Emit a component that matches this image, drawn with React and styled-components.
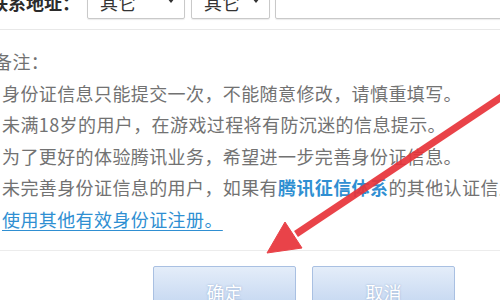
import styled, { createGlobalStyle } from 'styled-components';

const GlobalStyle = createGlobalStyle`
  html, body {
    margin: 0;
    padding: 0;
    background: #ffffff;
  }
  body {
    font-family: "Noto Sans CJK SC", "Noto Sans", sans-serif;
    overflow: hidden;
  }
`;

const StyledPage = styled.div`
  position: relative;
  width: 500px;
  height: 300px;
  overflow: hidden;
  background: #ffffff;
`;

const StyledAddressRow = styled.div`
  display: flex;
  align-items: center;
  margin-top: -15px;
  padding-bottom: 10px;
  border-bottom: 1px solid #e8e8e8;
  font-size: 18px;
`;

const StyledLabel = styled.span`
  flex: none;
  margin-left: -10px;
  width: 97px;
  color: #2b2b2b;
  font-weight: 700;
  line-height: 34px;
  white-space: nowrap;
`;

const StyledSelect = styled.div`
  flex: none;
  box-sizing: border-box;
  display: flex;
  align-items: center;
  justify-content: space-between;
  width: ${props => props.width}px;
  height: 34px;
  margin-right: ${props => props.gap}px;
  padding: 0 9px 0 12px;
  border: 1px solid #c9c9c9;
  border-radius: 2px;
  box-shadow: 0 1px 1px rgba(0, 0, 0, 0.08);
  color: #333333;
`;

const StyledCaret = styled.span`
  width: 0;
  height: 0;
  margin-top: -4px;
  border-left: 4px solid transparent;
  border-right: 4px solid transparent;
  border-top: 5px solid #333333;
`;

const StyledTextInput = styled.div`
  flex: 1;
  box-sizing: border-box;
  height: 34px;
  margin-right: -10px;
  border: 1px solid #c9c9c9;
  border-radius: 2px;
  box-shadow: 0 1px 1px rgba(0, 0, 0, 0.08);
`;

const StyledNotes = styled.div`
  padding: 16px 0 15px 2px;
  border-bottom: 1px solid #ececec;
  color: #727272;
  font-size: 18px;
  letter-spacing: 0.4px;
  line-height: 31.5px;
  white-space: nowrap;
`;

const StyledNoteTitle = styled.div`
  margin-left: -8px;
`;

const StyledNoteLine = styled.div``;

const StyledHighlight = styled.span`
  color: #2f8fd2;
  font-weight: 700;
`;

const StyledRegisterLink = styled.a`
  color: #2f8fd2;
  text-decoration: underline;
  text-underline-offset: 3px;
  cursor: pointer;
`;

const StyledButtonBar = styled.div`
  display: flex;
  gap: 16px;
  padding: 15px 0 0 153px;
`;

const StyledActionButton = styled.button`
  box-sizing: border-box;
  width: 143px;
  height: 52px;
  padding: 0;
  border: 1px solid #a9c0e2;
  border-radius: 2px;
  background: linear-gradient(#e4edf9, #bcd1ef);
  color: #ffffff;
  font-family: inherit;
  font-size: 18px;
  line-height: 50px;
  text-shadow: 0 0 2px #8ea7cc;
`;

const StyledPointer = styled.svg`
  position: absolute;
  top: 0;
  left: 0;
  pointer-events: none;
`;

const PointerArrow = () => (
  <StyledPointer width="500" height="300" viewBox="0 0 500 300">
    <g fill="#e8343a" stroke="#e8343a" opacity="0.92">
      <line x1="515" y1="88" x2="296" y2="234" strokeWidth="7" />
      <polygon points="267,253 285,222 302,248" strokeWidth="1" strokeLinejoin="round" />
    </g>
  </StyledPointer>
);

const App = () => {
  return (
    <StyledPage>
      <GlobalStyle />
      <StyledAddressRow>
        <StyledLabel>联系地址：</StyledLabel>
        <StyledSelect width={98} gap={6}>
          其它
          <StyledCaret />
        </StyledSelect>
        <StyledSelect width={79} gap={5}>
          其它
          <StyledCaret />
        </StyledSelect>
        <StyledTextInput />
      </StyledAddressRow>
      <StyledNotes>
        <StyledNoteTitle>备注：</StyledNoteTitle>
        <StyledNoteLine>身份证信息只能提交一次，不能随意修改，请慎重填写。</StyledNoteLine>
        <StyledNoteLine>未满18岁的用户，在游戏过程将有防沉迷的信息提示。</StyledNoteLine>
        <StyledNoteLine>为了更好的体验腾讯业务，希望进一步完善身份证信息。</StyledNoteLine>
        <StyledNoteLine>
          未完善身份证信息的用户，如果有<StyledHighlight>腾讯征信体系</StyledHighlight>的其他认证信息
        </StyledNoteLine>
        <StyledNoteLine>
          <StyledRegisterLink>使用其他有效身份证注册。</StyledRegisterLink>
        </StyledNoteLine>
      </StyledNotes>
      <StyledButtonBar>
        <StyledActionButton>确定</StyledActionButton>
        <StyledActionButton>取消</StyledActionButton>
      </StyledButtonBar>
      <PointerArrow />
    </StyledPage>
  );
};

export default App;
